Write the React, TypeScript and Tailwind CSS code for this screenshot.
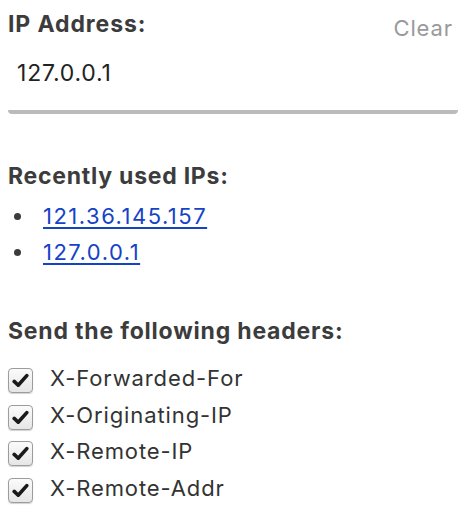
import React from "react";

const Check = () => (
  <span className="mt-[3px] flex h-[25px] w-[25px] shrink-0 items-center justify-center rounded-[4px] border border-[#9c9c9c] bg-gradient-to-b from-[#fbfbfb] to-[#e6e6e6] shadow-[0_1px_1px_rgba(0,0,0,0.18)]">
    <svg width="17" height="15" viewBox="0 0 17 15">
      <path d="M2.2 8.4 L6.2 12.2 L14.8 2.6" fill="none" stroke="#1a1a1a" strokeWidth="3.6" strokeLinecap="round" strokeLinejoin="round" />
    </svg>
  </span>
);

export default function App() {
  const headers = ["X-Forwarded-For", "X-Originating-IP", "X-Remote-IP", "X-Remote-Addr"];
  return (
    <div className="w-[464px] h-[517px] bg-white pl-2 pr-[6px] pt-[10px] text-[#3c3c3c]" style={{ fontFamily: "Inter, 'Noto Sans', sans-serif" }}>
      <div className="flex h-[28px] items-start justify-between">
        <span className="text-[23px] leading-[28px] font-bold tracking-[0.9px]">IP Address:</span>
        <span className="mt-[4px] mr-[5px] text-[22px] leading-[28px] tracking-[0.9px] text-[#9a9a9a]">Clear</span>
      </div>
      <div className="h-[76px] rounded-b-[4px] border-b-4 border-[#bbbbbb] pl-[9px] pt-[21px] text-[23px] leading-[28px] tracking-[0.8px] text-[#222]">
        127.0.0.1
      </div>
      <div className="mt-[48px] text-[23px] leading-[28px] font-bold tracking-[0.75px]">Recently used IPs:</div>
      <ul className="mt-[12px] flex flex-col gap-[8px] text-[22px] leading-[28px]">
        {["121.36.145.157", "127.0.0.1"].map((ip) => (
          <li key={ip} className="flex items-center h-[28px]">
            <span className="ml-[6px] mr-[22px] h-[7px] w-[7px] rounded-full bg-[#3c3c3c]" />
            <a href="#" className="text-[#1543c6] tracking-[1.5px] underline decoration-[2px] underline-offset-[3px]">{ip}</a>
          </li>
        ))}
      </ul>
      <div className="mt-[51px] text-[23px] leading-[28px] font-bold tracking-[0.8px]">Send the following headers:</div>
      <div className="mt-[20px] flex flex-col gap-[10.5px]">
        {headers.map((h) => (
          <label key={h} className="flex items-start h-[26px] text-[22px] leading-[26px] tracking-[0.9px] text-[#333]">
            <Check />
            <span className="ml-[17px]">{h}</span>
          </label>
        ))}
      </div>
    </div>
  );
}
